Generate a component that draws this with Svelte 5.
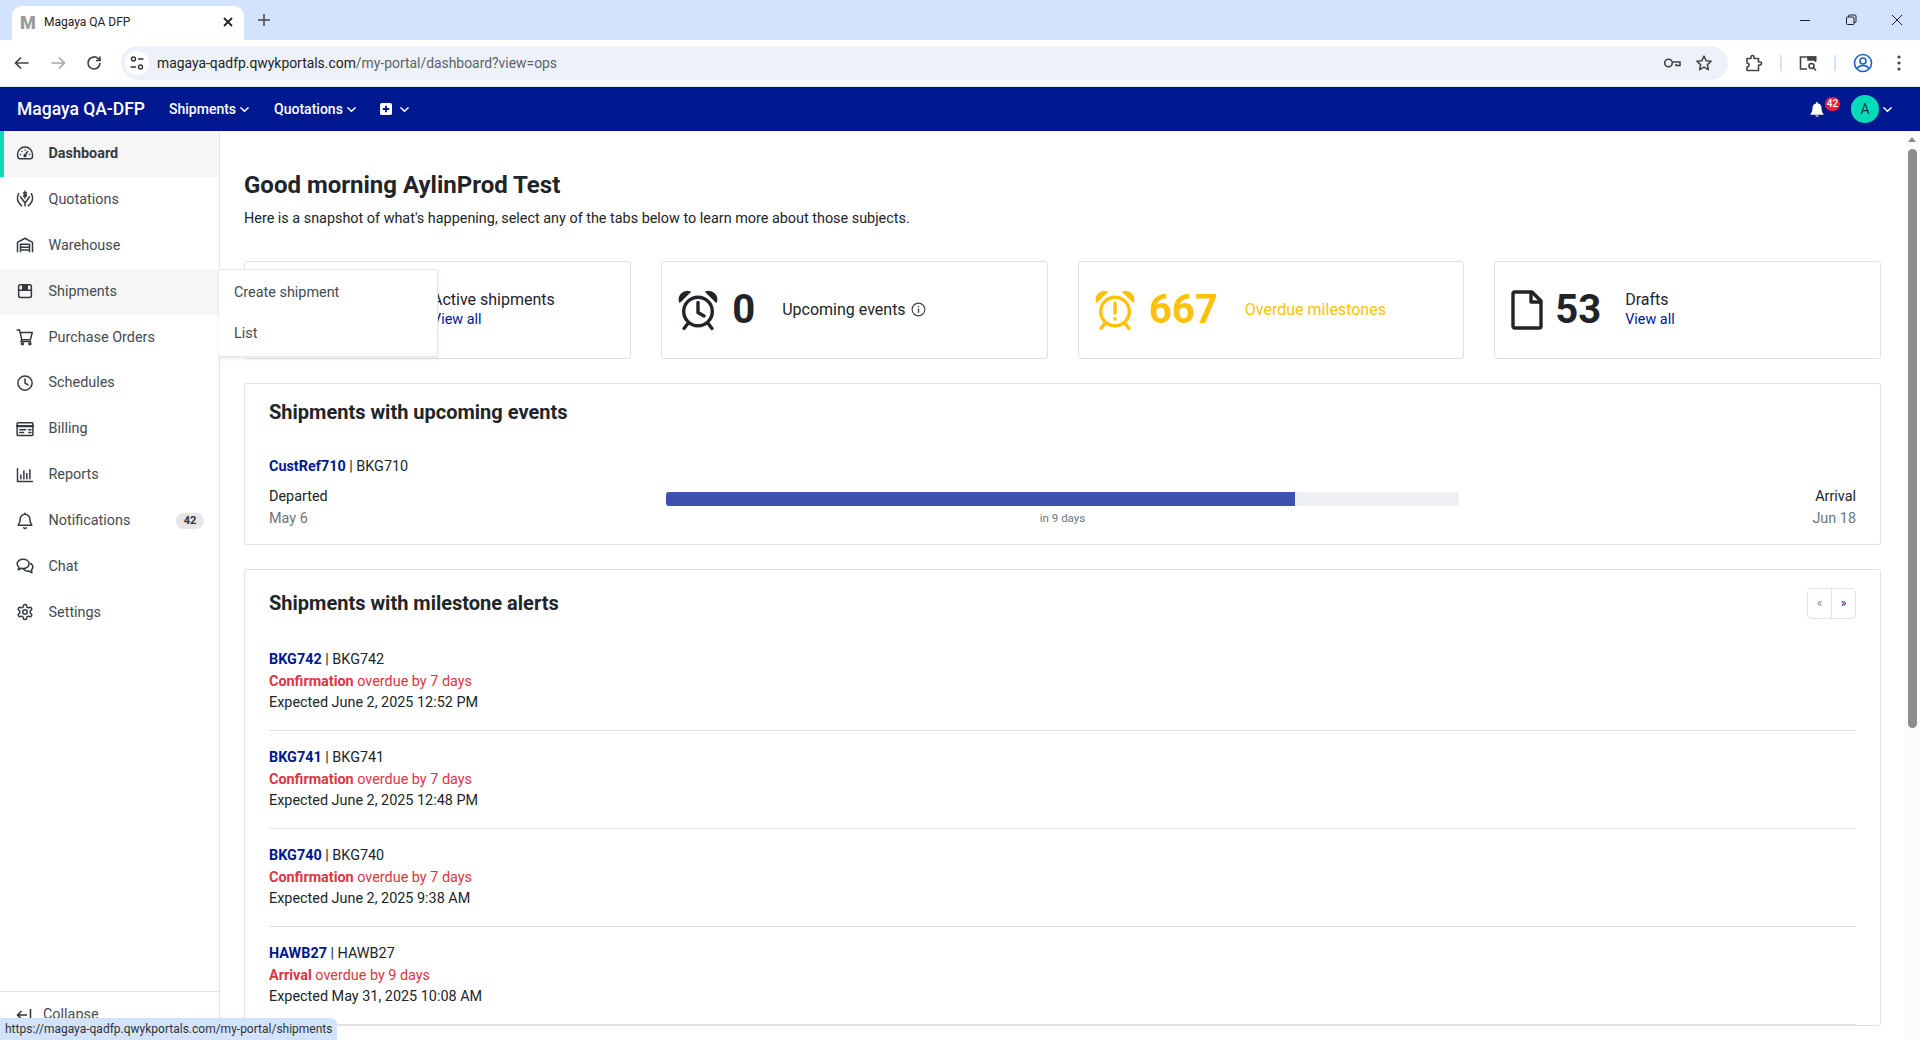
<script>
	const icons = {
		gauge: '<path d="M4.2 19.5h15.6a2 2 0 0 0 1.8-1.2A10 10 0 0 0 22 14a10 10 0 0 0-20 0c0 1.5.3 3 .9 4.3a1.8 1.8 0 0 0 1.3 1.2z"/><path d="M12 15l3.5-5M6 14h.01M8 10h.01M12 8h.01M18 14h.01"/><circle cx="12" cy="15.5" r="1.2"/>',
		hands: '<path d="M3.500 5C1 9 1.500 15.500 5 18.500l2.500 2.500M20.500 5C23 9 22.500 15.500 19 18.500L16.500 21"/><path d="M6 9l3.500 5 2.500 3 2.500-3L18 9M12 17v4"/><path d="M14 4c-.5-1-3.500-1.200-3.800.2C10 6 14 5.500 14 7.500c0 1.300-3.300 1.300-4 .2M12 1.500v9"/>',
		warehouse: '<path d="M2 21V8.500L12 3l10 5.500V21"/><path d="M6 21V11h12v10M6 15h12M6 18.500h12"/>',
		box: '<rect x="3.500" y="3.500" width="17" height="17" rx="2.500"/><path d="M3.500 11h17" /><path d="M9 3.500h6V11l-3-1.500L9 11z" fill="currentColor"/>',
		cart: '<path d="M1.500 2.500h3.200l3 13h11.500l2.500-9.500H5.500"/><path d="M7.700 15.500 6.500 18h13"/><circle cx="8.500" cy="21" r="1.400"/><circle cx="18.500" cy="21" r="1.400"/>',
		clock: '<circle cx="12" cy="12" r="9.500"/><path d="M12 6.500V12l4 2.500"/>',
		card: '<rect x="1.500" y="3.500" width="21" height="17" rx="1"/><path d="M1.500 8h21" stroke-width="3"/><path d="M5 13h8M5 16.500h5M17 13h3M17 16.500h3"/>',
		chart: '<path d="M2 3.500V20.500H22"/><path d="M6.500 17v-5M10.500 17V6.500M14.500 17v-7M18.500 17V5"/>',
		bell: '<path d="M12 3a6.500 6.500 0 0 0-6.500 6.500c0 5-2.500 7-2.500 8h18c0-1-2.500-3-2.500-8A6.500 6.500 0 0 0 12 3z"/><path d="M12 1.500V3M10.500 21a1.600 1.600 0 0 0 3 0"/>',
		chat: '<path d="M9.500 3C5 3 1.500 5.700 1.500 9c0 1.700 1 3.200 2.400 4.300L3 17l4-2c.8.200 1.600.300 2.500.300 4.500 0 8-2.800 8-6.300s-3.500-6-8-6z"/><path d="M19 8.500c2.200 1 3.500 2.800 3.500 4.700 0 1.500-.8 2.900-2 3.900l.8 3.900-4-2.200c-3 .4-6-.8-7.500-2.800"/>',
		gear: '<path d="M12.220 2h-.44a2 2 0 0 0-2 2v.18a2 2 0 0 1-1 1.730l-.43.250a2 2 0 0 1-2 0l-.15-.08a2 2 0 0 0-2.730.730l-.22.380a2 2 0 0 0 .730 2.730l.15.100a2 2 0 0 1 1 1.720v.510a2 2 0 0 1-1 1.740l-.15.090a2 2 0 0 0-.730 2.730l.22.380a2 2 0 0 0 2.730.730l.15-.08a2 2 0 0 1 2 0l.43.250a2 2 0 0 1 1 1.730V20a2 2 0 0 0 2 2h.44a2 2 0 0 0 2-2v-.18a2 2 0 0 1 1-1.730l.43-.25a2 2 0 0 1 2 0l.15.08a2 2 0 0 0 2.730-.730l.22-.39a2 2 0 0 0-.730-2.730l-.15-.08a2 2 0 0 1-1-1.740v-.5a2 2 0 0 1 1-1.740l.15-.09a2 2 0 0 0 .730-2.730l-.22-.38a2 2 0 0 0-2.730-.730l-.15.08a2 2 0 0 1-2 0l-.43-.25a2 2 0 0 1-1-1.730V4a2 2 0 0 0-2-2z"/><circle cx="12" cy="12" r="3"/>'
	};

	const navItems = [
		{ label: 'Dashboard', icon: 'gauge', active: true },
		{ label: 'Quotations', icon: 'hands' },
		{ label: 'Warehouse', icon: 'warehouse' },
		{ label: 'Shipments', icon: 'box', hover: true },
		{ label: 'Purchase Orders', icon: 'cart' },
		{ label: 'Schedules', icon: 'clock' },
		{ label: 'Billing', icon: 'card' },
		{ label: 'Reports', icon: 'chart' },
		{ label: 'Notifications', icon: 'bell', badge: 42 },
		{ label: 'Chat', icon: 'chat' },
		{ label: 'Settings', icon: 'gear' }
	];

	const alerts = [
		{ ref: 'BKG742', num: 'BKG742', event: 'Confirmation', days: 7, expected: 'June 2, 2025 12:52 PM' },
		{ ref: 'BKG741', num: 'BKG741', event: 'Confirmation', days: 7, expected: 'June 2, 2025 12:48 PM' },
		{ ref: 'BKG740', num: 'BKG740', event: 'Confirmation', days: 7, expected: 'June 2, 2025 9:38 AM' },
		{ ref: 'HAWB27', num: 'HAWB27', event: 'Arrival', days: 9, expected: 'May 31, 2025 10:08 AM' }
	];
</script>

{#snippet chevron(size)}
	<svg class="chev" width={size} height={size} viewBox="0 0 12 12" fill="none" stroke="currentColor" stroke-width="1.6" stroke-linecap="round" stroke-linejoin="round"><path d="M2 4l4 4 4-4" /></svg>
{/snippet}

{#snippet alarm(inner)}
	<svg class="alarm" width="42" height="42" viewBox="0 0 42 42" fill="none" stroke="currentColor" stroke-width="3.400" stroke-linecap="round">
		<circle cx="21" cy="22.500" r="14.300" />
		<path d="M2.800 13a8 8 0 0 1 10.200-10z M39.200 13a8 8 0 0 0-10.200-10z" fill="currentColor" stroke-width="1.500" stroke-linejoin="round" />
		<path d="M10.500 35l-3.500 4.500M31.500 35l3.500 4.500" />
		<path d={inner} />
	</svg>
{/snippet}

<div class="window">
	<div class="tabstrip">
		<div class="tab">
			<span class="favicon">M</span>
			<span class="tab-title">Magaya QA DFP</span>
			<svg class="tab-close" width="16" height="16" viewBox="0 0 16 16" stroke="#222" stroke-width="1.800" fill="none"><path d="M4 4l8 8M12 4l-8 8" /></svg>
		</div>
		<svg class="tab-new" width="16" height="16" viewBox="0 0 16 16" stroke="#444" stroke-width="1.500" fill="none"><path d="M8 2v12M2 8h12" /></svg>
		<div class="win-controls">
			<svg width="12" height="12" viewBox="0 0 12 12" stroke="#222" fill="none"><path d="M1 6.500h10" /></svg>
			<svg width="12" height="12" viewBox="0 0 12 12" stroke="#222" fill="none"><rect x="1.500" y="3" width="7.500" height="7.500" rx="1" /><path d="M3.500 3V2a1 1 0 0 1 1-1h5.500a1 1 0 0 1 1 1v5.500a1 1 0 0 1-1 1H9" /></svg>
			<svg width="12" height="12" viewBox="0 0 12 12" stroke="#222" fill="none"><path d="M1 1l10 10M11 1L1 11" /></svg>
		</div>
	</div>

	<div class="toolbar">
		<div class="tb-nav">
			<svg width="18" height="18" viewBox="0 0 18 18" stroke="#444" stroke-width="1.700" fill="none"><path d="M15.500 9h-13M8 3.500 2.500 9 8 14.500" /></svg>
			<svg width="18" height="18" viewBox="0 0 18 18" stroke="#a9a9a9" stroke-width="1.700" fill="none"><path d="M2.500 9h13M10 3.500 15.500 9 10 14.500" /></svg>
			<svg width="18" height="18" viewBox="0 0 18 18" stroke="#444" stroke-width="1.700" fill="none"><path d="M15 9a6 6 0 1 1-1.800-4.300L15 6.500" /><path d="M15 2.500v4h-4" /></svg>
		</div>
		<div class="urlbar">
			<span class="site-icon">
				<svg width="16" height="16" viewBox="0 0 16 16" stroke="#333" stroke-width="1.400" fill="none"><circle cx="4.500" cy="4" r="2" /><path d="M9 4h5.500M1.500 12H7" /><circle cx="11.500" cy="12" r="2" /></svg>
			</span>
			<span class="url"><span class="host">magaya-qadfp.qwykportals.com</span>/my-portal/dashboard?view=ops</span>
			<svg class="u-key" width="18" height="18" viewBox="0 0 18 18" stroke="#444" stroke-width="1.600" fill="none"><circle cx="5.500" cy="9" r="3.800" /><path d="M9.500 8h7.500v3.500h-4V10" /></svg>
			<svg class="u-star" width="18" height="18" viewBox="0 0 24 24" stroke="#444" stroke-width="2" fill="none" stroke-linejoin="round"><path d="M12 2.800l2.800 6.200 6.700.7-5 4.500 1.400 6.700L12 17.500l-5.900 3.400 1.400-6.700-5-4.500 6.700-.7z" /></svg>
		</div>
		<div class="tb-right">
			<svg width="18" height="18" viewBox="0 0 18 18" stroke="#444" stroke-width="1.600" fill="none" stroke-linejoin="round"><path d="M2 4.500h4V3a1.500 1.500 0 0 1 3 0v1.500h4.500V8H15a1.500 1.500 0 0 1 0 3h-1.500v5.500H2V13a2 2 0 0 0 0-4z" /></svg>
			<span class="tb-sep"></span>
			<svg width="18" height="18" viewBox="0 0 18 18" stroke="#444" stroke-width="1.600" fill="none"><path d="M8 15H1.500V3h15v5" /><path d="M9 3h7.500v3H9z" fill="#444" /><circle cx="12.500" cy="12" r="2.500" /><path d="M14.500 14l2.500 2.500" /></svg>
			<span class="tb-sep"></span>
			<svg width="20" height="20" viewBox="0 0 20 20" stroke="#1a5fd0" stroke-width="1.600" fill="none"><circle cx="10" cy="10" r="8.500" /><circle cx="10" cy="8" r="3" /><path d="M4 15.500c1.500-2.500 3.500-3 6-3s4.500.5 6 3" /></svg>
			<svg class="tb-menu" width="4" height="16" viewBox="0 0 4 16" fill="#444"><circle cx="2" cy="2" r="1.600" /><circle cx="2" cy="8" r="1.600" /><circle cx="2" cy="14" r="1.600" /></svg>
		</div>
	</div>

	<header class="appbar">
		<span class="brand">Magaya QA-DFP</span>
		<span class="top-link">Shipments {@render chevron(11)}</span>
		<span class="top-link">Quotations {@render chevron(11)}</span>
		<span class="top-link plus">
			<svg width="12" height="12" viewBox="0 0 13 13"><rect width="13" height="13" rx="2" fill="#fff" /><path d="M6.500 3v7M3 6.500h7" stroke="#00188f" stroke-width="2" /></svg>
			{@render chevron(11)}
		</span>
		<div class="app-right">
			<span class="bell">
				<svg width="14" height="15" viewBox="0 0 14 15" fill="#fff"><path d="M7 0a1 1 0 0 0-1 1v.6A4.500 4.500 0 0 0 2.500 6c0 4-1.500 5-2 6v.8h13V12c-.5-1-2-2-2-6A4.500 4.500 0 0 0 8 1.600V1a1 1 0 0 0-1-1zM5.300 13.500a1.800 1.800 0 0 0 3.400 0z" /></svg>
				<span class="bell-badge">42</span>
			</span>
			<span class="avatar">A</span>
			{@render chevron(11)}
		</div>
	</header>

	<div class="body">
		<aside class="sidebar">
			<nav class="side-nav">
				{#each navItems as item}
					<div class="side-item" class:active={item.active} class:hover={item.hover}>
						<svg width="18" height="18" viewBox="0 0 24 24" fill="none" stroke="currentColor" stroke-width="2" stroke-linecap="round" stroke-linejoin="round">{@html icons[item.icon]}</svg>
						<span class="side-label">{item.label}</span>
						{#if item.badge}<span class="side-badge">{item.badge}</span>{/if}
					</div>
				{/each}
			</nav>
			<div class="collapse">
				<svg width="16" height="14" viewBox="0 0 16 14" fill="none" stroke="#333" stroke-width="1.500"><path d="M11 7H1.500M5.500 3 1.500 7l4 4M14.500 1v12" /></svg>
				<span>Collapse</span>
			</div>
		</aside>

		<div class="dropdown">
			<div class="drop-item">Create shipment</div>
			<div class="drop-item">List</div>
		</div>

		<main class="content">
			<h1>Good morning AylinProd Test</h1>
			<p class="lead">Here is a snapshot of what's happening, select any of the tabs below to learn more about those subjects.</p>

			<section class="stats">
				<div class="stat">
					<span class="covered"></span>
					<div class="stat-text">
						<span>Active shipments</span>
						<a href="#all">View all</a>
					</div>
				</div>
				<div class="stat">
					{@render alarm('M21 13.500v10l6 3.500')}
					<span class="num after-icon">0</span>
					<div class="stat-text inline after-alarm">
						<span>Upcoming events</span>
						<svg width="15" height="15" viewBox="0 0 16 16" fill="none" stroke="#444" stroke-width="1.200"><circle cx="8" cy="8" r="6.800" /><path d="M8 7v4.500M8 4.300v1.200" stroke-width="1.500" /></svg>
					</div>
				</div>
				<div class="stat warn">
					{@render alarm('M21 14v10M21 29.500v.5')}
					<span class="num after-icon">667</span>
					<div class="stat-text after-alarm"><span>Overdue milestones</span></div>
				</div>
				<div class="stat">
					<svg width="32" height="40" viewBox="0 0 32 40" fill="none" stroke="currentColor" stroke-width="3.400" stroke-linejoin="round"><path d="M21 2H3.700A1.700 1.700 0 0 0 2 3.700v32.600A1.700 1.700 0 0 0 3.700 38h24.600a1.700 1.700 0 0 0 1.700-1.700V11z" /><path d="M20 2v10h10" /></svg>
					<span class="num">53</span>
					<div class="stat-text">
						<span>Drafts</span>
						<a href="#all">View all</a>
					</div>
				</div>
			</section>

			<section class="panel upcoming">
				<h2>Shipments with upcoming events</h2>
				<div class="ship-ref"><a href="#ref">CustRef710</a> | BKG710</div>
				<div class="timeline">
					<div>
						<div>Departed</div>
						<div class="muted">May 6</div>
					</div>
					<div class="progress-col">
						<div class="track"><div class="fill" style="width: 79.3%"></div></div>
						<div class="eta">in 9 days</div>
					</div>
					<div class="end">
						<div>Arrival</div>
						<div class="muted">Jun 18</div>
					</div>
				</div>
			</section>

			<section class="panel alerts">
				<div class="panel-head">
					<h2>Shipments with milestone alerts</h2>
					<div class="pager">
						<span class="prev">«</span>
						<span class="next">»</span>
					</div>
				</div>
				{#each alerts as a}
					<div class="alert">
						<div><a href="#ref">{a.ref}</a> | {a.num}</div>
						<div class="late"><b>{a.event}</b> overdue by {a.days} days</div>
						<div>Expected {a.expected}</div>
					</div>
				{/each}
			</section>
		</main>

		<div class="scrollbar">
			<span class="arrow"></span>
			<span class="thumb"></span>
		</div>
	</div>

	<div class="status">https://magaya-qadfp.qwykportals.com/my-portal/shipments</div>
</div>

<style>
	:global(body) {
		margin: 0;
		overflow: hidden;
		background: #fff;
	}
	.window {
		position: relative;
		width: 1920px;
		height: 1040px;
		display: flex;
		flex-direction: column;
		overflow: hidden;
		font-family: Roboto, 'Liberation Sans', sans-serif;
		font-size: 14.4px;
		color: #212529;
	}
	a {
		color: #00188f;
		text-decoration: none;
	}

	/* browser chrome */
	.tabstrip {
		height: 40px;
		flex: none;
		display: flex;
		align-items: flex-end;
		background: #d3e3fd;
		padding-left: 12px;
	}
	.tab {
		width: 232px;
		height: 34px;
		box-sizing: border-box;
		display: flex;
		align-items: center;
		padding: 0 8px 2px 8px;
		background: #fff;
		border-radius: 10px 10px 0 0;
	}
	.favicon {
		width: 24px;
		font-size: 18px;
		font-weight: 900;
		color: #9a9a9a;
	}
	.tab-title {
		flex: 1;
		font-size: 12px;
		color: #222;
	}
	.tab-new {
		margin: 0 0 12px 12px;
	}
	.win-controls {
		margin-left: auto;
		height: 100%;
		display: flex;
		align-items: center;
		gap: 34px;
		padding-right: 17px;
	}
	.toolbar {
		height: 47px;
		flex: none;
		box-sizing: border-box;
		display: flex;
		align-items: center;
		background: #fff;
		border-bottom: 1px solid #e3e3e3;
	}
	.tb-nav {
		width: 121px;
		box-sizing: border-box;
		display: flex;
		gap: 18px;
		padding-left: 13px;
	}
	.urlbar {
		width: 1607px;
		height: 34px;
		box-sizing: border-box;
		display: flex;
		align-items: center;
		background: #edf2fa;
		border-radius: 17px;
		padding: 0 15px 0 4px;
	}
	.site-icon {
		width: 24px;
		height: 24px;
		display: flex;
		align-items: center;
		justify-content: center;
		border-radius: 50%;
		background: #fff;
		margin-right: 8px;
	}
	.url {
		flex: 1;
		font-size: 13.9px;
		color: #5f6368;
	}
	.host {
		color: #1f1f1f;
	}
	.u-key {
		margin-right: 14px;
	}
	.tb-right {
		flex: 1;
		display: flex;
		align-items: center;
		gap: 17px;
		padding-left: 17px;
	}
	.tb-sep {
		width: 2px;
		height: 16px;
		background: #d3e3fd;
	}
	.tb-menu {
		margin-left: 7px;
	}

	/* app bar */
	.appbar {
		height: 44px;
		flex: none;
		display: flex;
		align-items: center;
		background: #00188f;
		color: #fff;
		padding-left: 17px;
	}
	.brand {
		font-size: 17.5px;
		font-weight: 500;
		margin-right: 24px;
	}
	.top-link {
		display: flex;
		align-items: center;
		gap: 3px;
		font-size: 14px;
		font-weight: 500;
		margin-right: 24px;
	}
	.top-link.plus {
		gap: 7px;
		margin-left: -1px;
	}
	.app-right {
		margin-left: auto;
		display: flex;
		align-items: center;
		padding-right: 27px;
	}
	.bell {
		position: relative;
		display: flex;
		margin-right: 27px;
	}
	.bell-badge {
		position: absolute;
		left: 15px;
		top: -5px;
		min-width: 15px;
		height: 14px;
		border-radius: 7px;
		background: #ee1c41;
		color: #fff;
		font-size: 10px;
		font-weight: 500;
		line-height: 14px;
		text-align: center;
	}
	.avatar {
		width: 28px;
		height: 28px;
		display: flex;
		align-items: center;
		justify-content: center;
		border-radius: 50%;
		background: #06dbb7;
		color: #0b3a45;
		font-size: 14px;
		margin-right: 3px;
	}

	/* sidebar */
	.body {
		position: relative;
		flex: 1;
		min-height: 0;
		display: flex;
	}
	.sidebar {
		width: 220px;
		flex: none;
		box-sizing: border-box;
		display: flex;
		flex-direction: column;
		border-right: 1px solid #e2e2e2;
	}
	.side-nav {
		flex: 1;
	}
	.side-item {
		height: 45.9px;
		box-sizing: border-box;
		display: flex;
		align-items: center;
		gap: 14.5px;
		padding: 0 15px 1px 16px;
		color: #444b52;
	}
	.side-item.active {
		background: #f6f6f6;
		border-left: 4px solid #06dbb7;
		padding-left: 12px;
		font-weight: 700;
		color: #343a40;
	}
	.side-item.hover {
		background: #f6f6f6;
	}
	.side-item svg {
		flex: none;
		color: #343a40;
	}
	.side-label {
		flex: 1;
	}
	.side-badge {
		width: 28px;
		height: 16px;
		border-radius: 8px;
		background: #e6e6e6;
		color: #333;
		font-size: 11px;
		font-weight: 700;
		line-height: 16px;
		text-align: center;
	}
	.collapse {
		height: 49px;
		flex: none;
		box-sizing: border-box;
		display: flex;
		align-items: center;
		gap: 11px;
		padding: 0 0 3px 16px;
		border-top: 1px solid #e2e2e2;
		color: #444b52;
	}
	.dropdown {
		position: absolute;
		left: 219px;
		top: 138px;
		width: 219px;
		height: 88px;
		box-sizing: border-box;
		padding: 2px 0;
		background: #fff;
		border: 1px solid #e6e6e6;
		border-left: none;
		box-shadow: 0 2px 4px rgba(0, 0, 0, 0.08);
		color: #444b52;
		z-index: 2;
	}
	.drop-item {
		height: 41px;
		line-height: 41px;
		padding-left: 15px;
	}

	/* main column */
	.content {
		flex: 1;
		min-width: 0;
		padding: 0 24px;
		overflow: hidden;
	}
	h1 {
		margin: 40px 0 0;
		font-size: 24px;
		line-height: 28px;
		font-weight: 700;
	}
	.lead {
		margin: 9px 0 0;
		line-height: 21px;
	}
	.stats {
		display: grid;
		grid-template-columns: repeat(4, 1fr);
		gap: 30px;
		margin-top: 32px;
	}
	.stat {
		height: 98px;
		box-sizing: border-box;
		display: flex;
		align-items: center;
		padding-left: 16px;
		border: 1px solid #dfe1e4;
		border-radius: 3px;
	}
	.stat.warn {
		color: #ffc107;
	}
	.alarm {
		margin-left: -1px;
	}
	.covered {
		width: 171px;
	}
	.num {
		margin-left: 12px;
		font-size: 40px;
		font-weight: 700;
		line-height: 48px;
	}
	.num.after-icon {
		margin-left: 13.5px;
	}
	.stat-text {
		margin-left: 24px;
		padding-bottom: 1px;
		display: flex;
		flex-direction: column;
		font-size: 16px;
		line-height: 20px;
	}
	.stat-text.after-alarm {
		margin-left: 27px;
	}
	.stat-text.inline {
		flex-direction: row;
		align-items: center;
		gap: 5px;
	}
	.covered + .stat-text {
		margin-left: 0;
	}
	.stat-text a {
		font-size: 14.4px;
		line-height: 19px;
	}
	.panel {
		margin-top: 24px;
		padding: 0 24px;
		border: 1px solid #dfe1e4;
		border-radius: 3px;
	}
	h2 {
		margin: 0;
		font-size: 20px;
		line-height: 24px;
		font-weight: 700;
	}
	.upcoming {
		height: 162px;
		box-sizing: border-box;
		padding-top: 16px;
	}
	.ship-ref {
		margin-top: 32px;
		line-height: 21px;
	}
	.ship-ref a,
	.alert a {
		font-weight: 700;
	}
	.timeline {
		display: grid;
		grid-template-columns: 1fr 2fr 1fr;
		margin-top: 9px;
		line-height: 22px;
	}
	.muted {
		color: #6c757d;
	}
	.progress-col {
		padding-top: 6px;
	}
	.track {
		height: 14px;
		border-radius: 3px;
		background: #eef0f4;
		overflow: hidden;
	}
	.fill {
		height: 100%;
		background: #3f51ae;
	}
	.eta {
		margin-top: 3px;
		font-size: 11.5px;
		line-height: 18px;
		color: #6c757d;
		text-align: center;
	}
	.end {
		text-align: right;
	}
	.alerts {
		padding-top: 10px;
	}
	.panel-head {
		height: 46px;
		margin-bottom: 7px;
		display: flex;
		align-items: center;
		justify-content: space-between;
	}
	.pager {
		display: flex;
		height: 31px;
		box-sizing: border-box;
		border: 1px solid #e2e4e8;
		border-radius: 4px;
		font-size: 12px;
		line-height: 28px;
	}
	.pager span {
		width: 23px;
		text-align: center;
	}
	.prev {
		color: #8b8f96;
		border-right: 1px solid #e2e4e8;
	}
	.next {
		color: #00188f;
	}
	.alert {
		padding: 16px 0;
		line-height: 21.67px;
		border-bottom: 1px solid #dfe1e4;
	}
	.late {
		color: #dc3545;
	}

	/* page scrollbar */
	.scrollbar {
		position: relative;
		width: 15px;
		flex: none;
		background: #fbfbfb;
	}
	.arrow {
		position: absolute;
		left: 3px;
		top: 6px;
		border: 4.5px solid transparent;
		border-top: none;
		border-bottom: 5px solid #8c8c8c;
	}
	.thumb {
		position: absolute;
		left: 3px;
		top: 18px;
		width: 9px;
		height: 579px;
		border-radius: 5px;
		background: #8c8c8c;
	}

	.status {
		position: absolute;
		left: 0;
		bottom: 0;
		height: 22px;
		box-sizing: border-box;
		padding: 0 5px;
		background: #d3e3fd;
		border-radius: 0 6px 0 0;
		color: #333;
		font-size: 12px;
		line-height: 23px;
		z-index: 3;
	}
</style>
